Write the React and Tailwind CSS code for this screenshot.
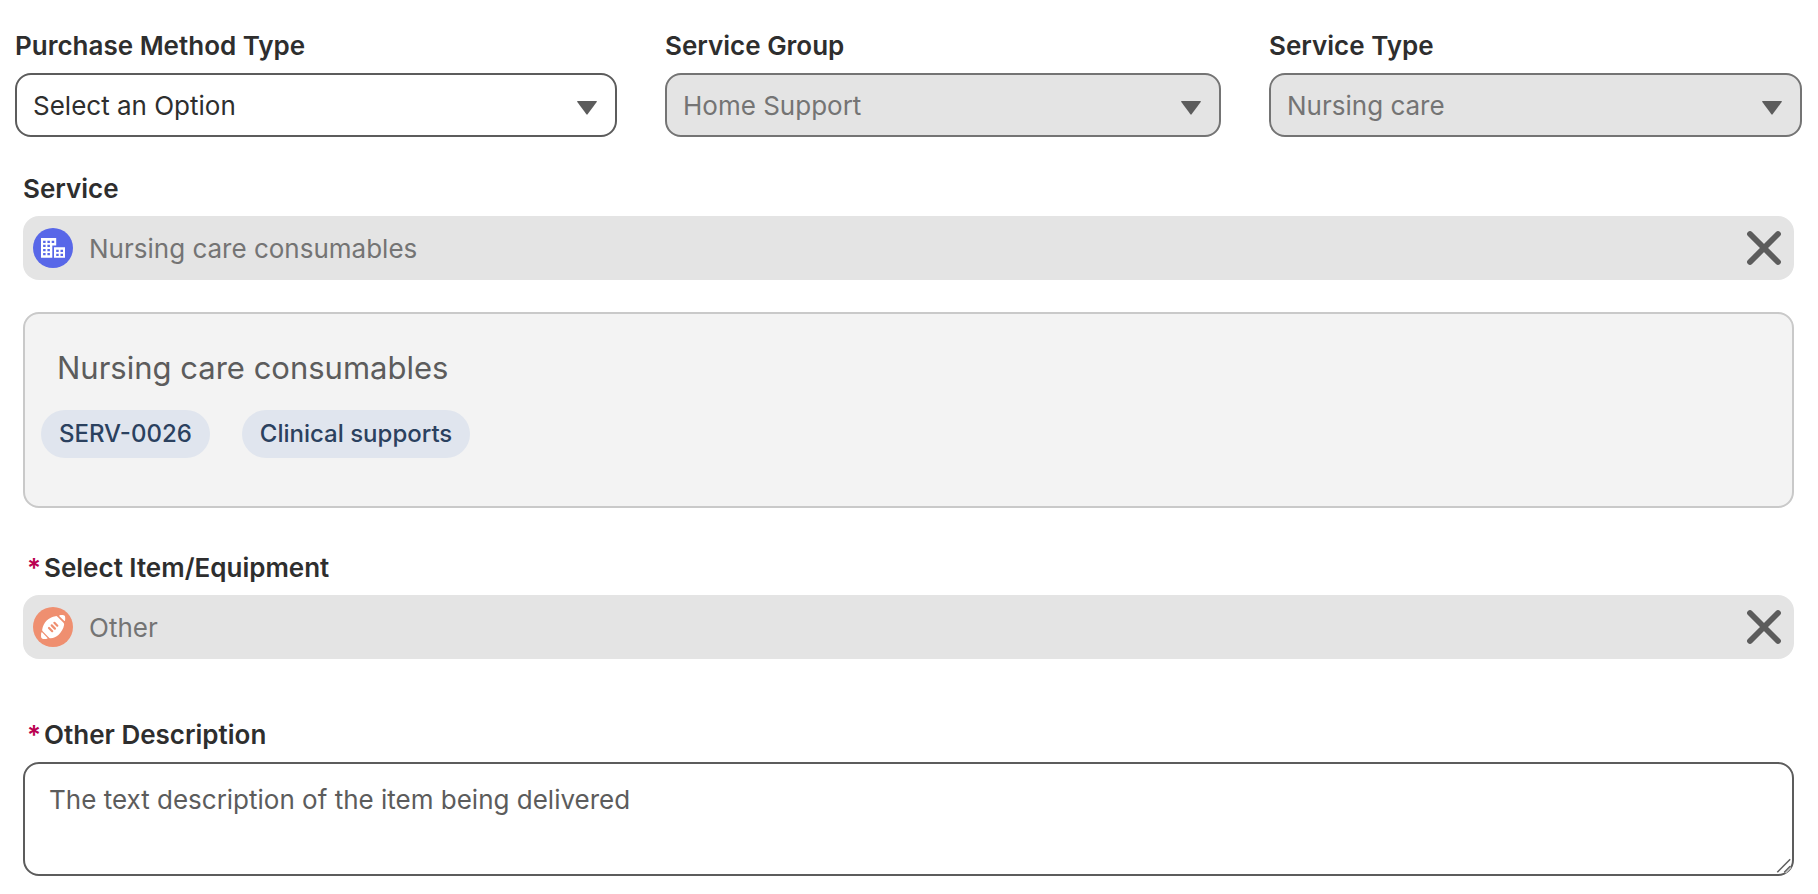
import React, { useState } from "react";

const AccountIcon = () => (
  <svg className="size-10 shrink-0" viewBox="0 0 40 40" aria-hidden="true">
    <circle cx="20" cy="20" r="20" fill="#5867e8" />
    <path
      fill="#fff"
      fillRule="evenodd"
      d="M8 10h15.200v7.400h-3.900v12.400H8zM10.100 12.700v2.300h2.500v-2.300zm4.300 0v2.300h2.500v-2.300zm4.300 0v2.300h2.500v-2.300zM10.100 16.700V19h2.500v-2.300zm4.300 0V19h2.500v-2.300zM10.100 20.900v2.300h2.500v-2.300zm4.300 0v2.300h2.500v-2.300zM10.100 25v2.300h2.500V25zm4.300 0v2.300h2.500V25z"
    />
    <path
      fill="#fff"
      fillRule="evenodd"
      d="M21 19.200h11v10.600H21zM23.200 21.700V24h2.500v-2.300zm4.300 0V24H30v-2.300zM23.200 25.700V28h2.500v-2.300zm4.300 0V28H30v-2.300z"
    />
  </svg>
);

const FootballIcon = () => (
  <svg className="size-10 shrink-0" viewBox="0 0 40 40" aria-hidden="true">
    <circle cx="20" cy="20" r="20" fill="#ef8f70" />
    <path
      fill="#fff"
      d="M22.500 9.200q1.200-.3 2 .5l6 6q.8.800.6 2c-.6 4-2.800 7.600-5.700 10.200-2.200 2-4.800 3.100-7.600 3.400q-1 .1-1.700-.6l-6.400-6.500q-.7-.7-.5-1.700c.6-3.300 2-6.400 4.500-8.900 2.500-2.500 5.500-4 8.800-4.400z"
    />
    <path fill="#fff" d="M26.400 9.200q-.6-.8.400-1c1.300-.2 2.800-.2 3.900 0 .9.200 1.300.7 1.400 1.500.2 1.100.1 2.400 0 3.600q-.2 1.200-1 .5z" />
    <path fill="#fff" d="M8.200 26q.2-1.200 1.100-.4l5 5.100q.8.900-.3 1.100c-1.200.2-2.400.2-3.700.1-1.300-.1-2-.7-2.200-1.900-.1-1.300-.1-2.700.1-4z" />
    <path
      stroke="#ef8f70"
      strokeWidth="2.200"
      strokeLinecap="round"
      d="m16 21 3.200 3.200M18.700 18.400l3.200 3.200M21.400 15.800l2.900 2.900"
    />
  </svg>
);

const Label = ({ htmlFor, required, children }) => (
  <label
    htmlFor={htmlFor}
    className="mb-[9px] flex text-[26px] leading-9 font-semibold text-[#2e2e2e]"
  >
    {required && <span className="mr-[3px] ml-1 text-[#ba0050]">*</span>}
    {children}
  </label>
);

const SelectField = ({ id, label, options, disabled }) => (
  <div className="min-w-0">
    <Label htmlFor={id}>{label}</Label>
    <div className="relative">
      <select
        id={id}
        disabled={disabled}
        className="block h-16 w-full appearance-none rounded-2xl border-2 border-[#5c5c5c] bg-white pr-12 pl-4 text-[26px] text-[#2e2e2e] opacity-100 disabled:border-[#747474] disabled:bg-[#e4e4e4] disabled:text-[#747474]"
      >
        {options.map((option) => (
          <option key={option}>{option}</option>
        ))}
      </select>
      <svg
        className="pointer-events-none absolute top-7 right-5 h-[14px] w-5"
        viewBox="0 0 20 14"
        aria-hidden="true"
      >
        <path fill="#5c5c5c" d="M.6 0h18.800q.8.300.3 1L10.600 13.300q-.6.700-1.200 0L.3 1Q-.2.300.6 0z" />
      </svg>
    </div>
  </div>
);

const LookupField = ({ id, label, value, icon, required }) => (
  <div>
    <Label htmlFor={id} required={required}>
      {label}
    </Label>
    <div className="flex h-16 items-center rounded-2xl bg-[#e4e4e4] pr-3 pl-[10px]">
      {icon}
      <input
        id={id}
        type="text"
        value={value}
        disabled
        className="ml-4 min-w-0 flex-1 bg-transparent text-[26px] text-[#747474]"
      />
      <button type="button" aria-label={`Clear ${label}`}>
        <svg className="size-9" viewBox="0 0 36 36" aria-hidden="true">
          <path
            stroke="#5c5c5c"
            strokeWidth="5.800"
            strokeLinecap="round"
            d="M4 4l28 28M32 4L4 32"
          />
        </svg>
      </button>
    </div>
  </div>
);

const Badge = ({ children }) => (
  <span className="flex h-12 items-center rounded-full bg-[#e0e5ee] px-[18px] text-2xl font-medium text-[#2b415f]">
    {children}
  </span>
);

const App = () => {
  const [description, setDescription] = useState(
    "The text description of the item being delivered"
  );

  return (
    <form className="min-h-screen bg-white pt-7 pb-4 font-['Inter',sans-serif]">
      <div className="grid grid-cols-[602fr_556fr_533fr] gap-12 pr-4 pl-[15px]">
        <SelectField
          id="purchase-method"
          label="Purchase Method Type"
          options={["Select an Option"]}
        />
        <SelectField
          id="service-group"
          label="Service Group"
          options={["Home Support"]}
          disabled
        />
        <SelectField
          id="service-type"
          label="Service Type"
          options={["Nursing care"]}
          disabled
        />
      </div>

      <div className="mt-[34px] pr-6 pl-[23px]">
        <LookupField
          id="service"
          label="Service"
          value="Nursing care consumables"
          icon={<AccountIcon />}
        />

        <div className="mt-8 rounded-2xl border-2 border-[#c9c9c9] bg-[#f3f3f3] px-4 pt-8 pb-12">
          <h2 className="mb-5 px-4 text-[31px] leading-11 text-[#5c5c5c]">
            Nursing care consumables
          </h2>
          <div className="flex gap-8">
            <Badge>SERV-0026</Badge>
            <Badge>Clinical supports</Badge>
          </div>
        </div>

        <div className="mt-[42px]">
          <LookupField
            id="item"
            label="Select Item/Equipment"
            value="Other"
            icon={<FootballIcon />}
            required
          />
        </div>

        <div className="mt-[58px]">
          <Label htmlFor="other-description" required>
            Other Description
          </Label>
          <div className="relative">
            <textarea
              id="other-description"
              required
              value={description}
              onChange={(e) => setDescription(e.target.value)}
              className="block h-[114px] w-full resize-none rounded-2xl border-2 border-[#5c5c5c] bg-white px-6 py-[18px] text-[26px] leading-9 text-[#5c5c5c]"
            />
            <svg
              className="pointer-events-none absolute right-0 bottom-0 size-5"
              viewBox="0 0 20 20"
              fill="none"
              aria-hidden="true"
            >
              <path stroke="#5c5c5c" strokeWidth="1.500" d="M3.300 16.200 16.200 3.300" />
              <path stroke="#5c5c5c" strokeWidth="1.500" d="M10.300 16.200 16.200 10.300" />
              <path stroke="#c4c4c4" strokeWidth="1.500" d="M11.500 17 17 11.500" />
            </svg>
          </div>
        </div>
      </div>
    </form>
  );
};

export default App;
